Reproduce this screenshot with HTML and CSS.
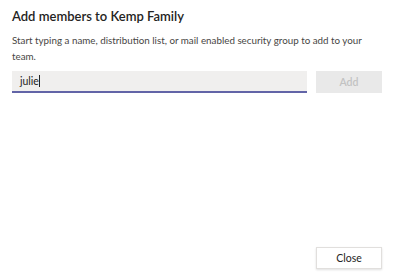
FILE: index.html
```html
<!DOCTYPE html>
<html>
<head>
<meta charset="utf-8">
<link rel="stylesheet" href="styles.css">
</head>
<body>
<div class="dialog">
  <h1 class="title">Add members to Kemp Family</h1>
  <p class="desc">Start typing a name, distribution list, or mail enabled security group to add to your team.</p>
  <div class="row">
    <div class="input"><span class="value">julie</span><span class="caret"></span></div>
    <div class="btn btn-disabled">Add</div>
  </div>
  <div class="spacer"></div>
  <div class="footer">
    <div class="btn btn-close">Close</div>
  </div>
</div>
</body>
</html>
```
FILE: styles.css
```css
html, body {
  margin: 0;
  padding: 0;
  background: #ffffff;
}
body {
  width: 400px;
  height: 277px;
  overflow: hidden;
  font-family: Lato, "Open Sans", sans-serif;
  color: #252423;
}
.dialog {
  box-sizing: border-box;
  height: 277px;
  padding: 6px 18px 8px 12px;
  display: flex;
  flex-direction: column;
}
.title {
  margin: 0;
  font-size: 13px;
  font-weight: 600;
  line-height: 20px;
  color: #252423;
}
.desc {
  margin: 6px 0 0;
  font-size: 9.8px;
  line-height: 16px;
  color: #484644;
}
.row {
  margin-top: 7px;
  display: flex;
  gap: 9px;
}
.input {
  width: 287px;
  height: 20px;
  background: #f0efee;
  border-bottom: 2px solid #6264a7;
  display: flex;
  align-items: center;
  padding-left: 8px;
  box-sizing: content-box;
  font-size: 10.5px;
  color: #252423;
}
.caret {
  width: 1px;
  height: 12px;
  background: #252423;
}
.btn {
  width: 66px;
  height: 22px;
  display: flex;
  align-items: center;
  justify-content: center;
  font-size: 10.5px;
  font-weight: 600;
  box-sizing: border-box;
}
.btn-disabled {
  background: #e9e9e9;
  color: #c2c2c2;
}
.spacer {
  flex: 1;
}
.footer {
  display: flex;
  justify-content: flex-end;
}
.btn-close {
  background: #ffffff;
  border: 1px solid #e1dfdd;
  box-shadow: 0 1px 2px rgba(0,0,0,0.12);
  color: #252423;
  font-weight: 400;
}
```
